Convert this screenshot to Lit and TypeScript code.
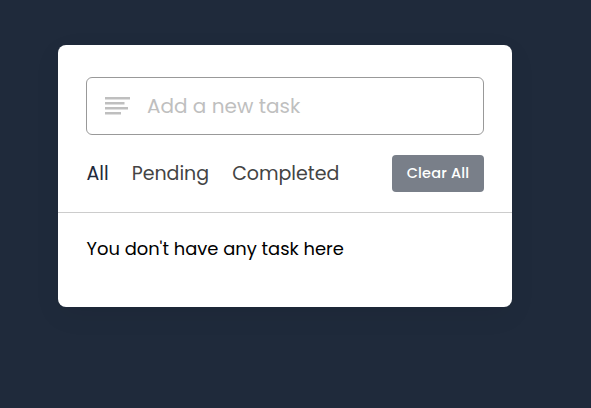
import { LitElement, html, css } from "lit";
import { customElement, state } from "lit/decorators.js";

@customElement("app-root")
export class AppRoot extends LitElement {
  static styles = css`
    :host {
      display: block;
      box-sizing: border-box;
      height: 100vh;
      padding: 45px 79px 0 58px;
      overflow: hidden;
      background: #1f2a3b;
      font-family: Poppins, Inter, "Open Sans", sans-serif;
    }
    * {
      box-sizing: border-box;
    }
    .card {
      width: 454px;
      height: 262px;
      padding-top: 32px;
      border-radius: 8px;
      background: #fff;
      box-shadow: 0 8px 28px rgba(0, 0, 0, 0.06);
    }
    .entry {
      display: flex;
      align-items: center;
      height: 58px;
      margin: 0 28px;
      padding-left: 18px;
      border: 1px solid #999;
      border-radius: 6px;
    }
    .bars {
      flex: none;
      width: 26px;
      height: 18px;
      fill: #bfbfbf;
    }
    .field {
      flex: 1;
      min-width: 0;
      height: 100%;
      margin-left: 16px;
      padding: 0;
      border: 0;
      outline: 0;
      background: none;
      font-family: inherit;
      font-size: 20px;
    }
    .field::placeholder {
      color: #bfbfbf;
      opacity: 1;
    }
    .controls {
      display: flex;
      align-items: center;
      height: 78px;
      padding: 0 28px 0 28.5px;
      border-bottom: 1px solid #ccc;
    }
    .filters {
      display: flex;
      flex: 1;
      gap: 23px;
    }
    .filter {
      color: #444;
      font-size: 19px;
      line-height: 28px;
      cursor: pointer;
    }
    .filter.active {
      color: #1f2a3b;
    }
    .clear {
      width: 92px;
      height: 37px;
      padding: 0;
      border: 0;
      border-radius: 4px;
      background: #797f89;
      color: #fff;
      font-family: inherit;
      font-size: 14.5px;
      font-weight: 500;
      letter-spacing: 0.2px;
    }
    .empty {
      padding: 22px 28px 0 28.5px;
      color: #000;
      font-size: 17.9px;
      line-height: 28px;
      white-space: nowrap;
    }
  `;

  @state() private active = "All";

  render() {
    return html`
      <div class="card">
        <div class="entry">
          <svg class="bars" viewBox="0 0 26 18">
            <path d="M0 0h25v2.5H0zM0 5h19.5v2.5H0zM0 10h23v2.5H0zM0 15h16v2.5H0z" />
          </svg>
          <input class="field" type="text" placeholder="Add a new task" />
        </div>
        <div class="controls">
          <div class="filters">
            ${["All", "Pending", "Completed"].map(
              (name) => html`<span
                class="filter ${name === this.active ? "active" : ""}"
                @click=${() => (this.active = name)}
                >${name}</span
              >`
            )}
          </div>
          <button class="clear">Clear All</button>
        </div>
        <div class="empty">You don't have any task here</div>
      </div>
    `;
  }
}
